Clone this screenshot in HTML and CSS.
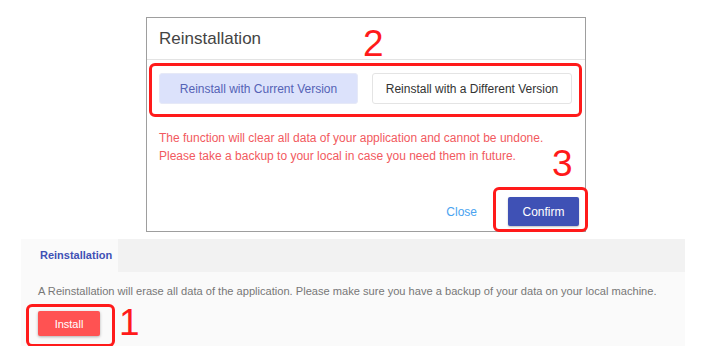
FILE: index.html
```html
<!DOCTYPE html>
<html lang="en">
<head>
  <meta charset="UTF-8">
  <meta name="viewport" content="width=device-width, initial-scale=1.0">
  <title>Reinstallation</title>
  <link rel="stylesheet" href="styles.css">
</head>
<body>
  <div class="dialog">
    <div class="dialog-title">Reinstallation</div>
    <div class="choice-row">
      <button class="choice active">Reinstall with Current Version</button>
      <button class="choice">Reinstall with a Different Version</button>
    </div>
    <p class="warning">
      The function will clear all data of your application and cannot be undone.<br>
      Please take a backup to your local in case you need them in future.
    </p>
    <div class="dialog-footer">
      <button class="link-btn">Close</button>
      <button class="confirm-btn">Confirm</button>
    </div>
    <span class="mark mark-two">2</span>
    <span class="mark mark-three">3</span>
  </div>

  <div class="panel">
    <div class="tabs">
      <div class="tab active">Reinstallation</div>
    </div>
    <div class="panel-body">
      <p class="note">A Reinstallation will erase all data of the application. Please make sure you have a backup of your data on your local machine.</p>
      <button class="install-btn">Install</button>
    </div>
    <span class="mark mark-one">1</span>
  </div>
</body>
</html>
```

FILE: styles.css
```css
body {
  margin: 0;
  background: #fff;
  font-family: 'Liberation Sans', Arial, sans-serif;
}
button {
  font-family: inherit;
  cursor: pointer;
}
.dialog {
  position: relative;
  box-sizing: border-box;
  width: 440px;
  margin: 17px 0 0 146px;
  padding-bottom: 5px;
  border: 1px solid #9e9e9e;
  background: #fff;
}
.dialog-title {
  height: 41px;
  line-height: 41px;
  padding-left: 12px;
  font-size: 17px;
  color: #444;
  border-bottom: 1px solid #e3e3e3;
}
.choice-row {
  display: flex;
  gap: 14px;
  margin: 3px 3px 0 2px;
  padding: 7px 7px 10px;
  border: 3px solid #ff1a1a;
  border-radius: 6px;
}
.choice {
  height: 31px;
  padding: 0;
  font-size: 12px;
  border-radius: 3px;
}
.choice.active {
  width: 199px;
  background: #dce2fb;
  border: 1px solid #e6e9f7;
  color: #5563b6;
}
.choice:not(.active) {
  width: 200px;
  background: #fff;
  border: 1px solid #e4e4e4;
  color: #333;
}
.warning {
  margin: 12px 0 0;
  padding-left: 12px;
  font-size: 12px;
  line-height: 18px;
  color: #f25a60;
}
.dialog-footer {
  display: flex;
  justify-content: flex-end;
  align-items: center;
  margin-top: 32px;
  padding-right: 6px;
}
.link-btn {
  background: none;
  border: none;
  padding: 0 31px 0 0;
  font-size: 12px;
  color: #4aa3f0;
}
.confirm-btn {
  position: relative;
  width: 71px;
  height: 29px;
  padding: 0;
  background: #3f51b5;
  color: #fff;
  border: none;
  border-radius: 2px;
  font-size: 12px;
  box-shadow: 0 1px 2px rgba(0, 0, 0, 0.25);
}
.confirm-btn::after {
  content: '';
  position: absolute;
  top: -10px;
  left: -15px;
  right: -9px;
  bottom: -6px;
  border: 3px solid #ff1a1a;
  border-radius: 6px;
}
.mark {
  position: absolute;
  font-size: 37px;
  line-height: 37px;
  color: #ff1a1a;
}
.mark-two {
  top: 7px;
  left: 216px;
}
.mark-three {
  top: 127px;
  left: 405px;
}
.mark-one {
  top: 65px;
  left: 98px;
}
.panel {
  position: relative;
  width: 664px;
  margin: 7px 0 0 21px;
  background: #fafafa;
}
.tabs {
  display: flex;
  height: 33px;
  background: #f2f2f2;
}
.tab {
  width: 97px;
  box-sizing: border-box;
  padding-left: 19px;
  line-height: 33px;
  font-size: 11px;
  font-weight: bold;
  color: #3f51b5;
}
.tab.active {
  background: #fafafa;
}
.panel-body {
  padding: 12px 17px 10px;
}
.note {
  margin: 0;
  font-size: 11.1px;
  line-height: 14px;
  color: #777;
}
.install-btn {
  position: relative;
  display: block;
  margin-top: 13px;
  width: 62px;
  height: 25px;
  padding: 0;
  background: #ff5252;
  color: #fff;
  border: none;
  border-radius: 2px;
  font-size: 11px;
  box-shadow: 0 1px 3px rgba(0, 0, 0, 0.3);
}
.install-btn::after {
  content: '';
  position: absolute;
  top: -7px;
  left: -12px;
  right: -15px;
  bottom: -11px;
  border: 3px solid #ff1a1a;
  border-radius: 6px;
}
```
